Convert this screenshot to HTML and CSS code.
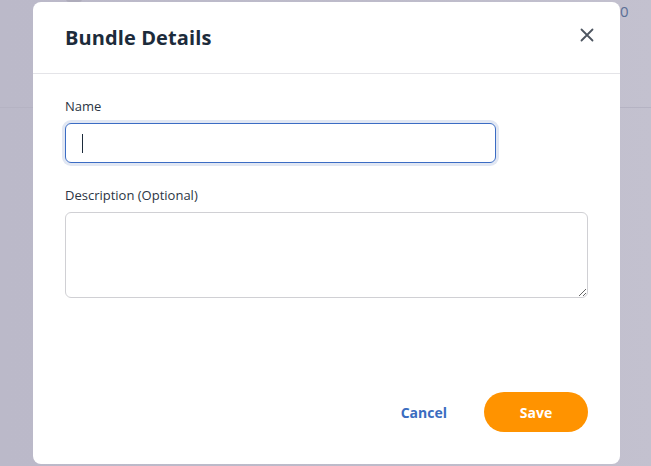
FILE: index.html
```html
<!DOCTYPE html>
<html>
<head>
<meta charset="utf-8">
<link rel="stylesheet" href="styles.css">
</head>
<body>
<div class="backdrop">
  <span class="bg-num">0</span>
  <span class="bg-chip"></span>
</div>
<div class="modal">
  <div class="modal-header">
    <h2 class="modal-title">Bundle Details</h2>
    <button class="close-btn" aria-label="Close">
      <svg width="14" height="14" viewBox="0 0 14 14"><path d="M1.5 1.5L12.5 12.5M12.5 1.5L1.5 12.5" stroke="#4d5560" stroke-width="1.8" fill="none" stroke-linecap="round"/></svg>
    </button>
  </div>
  <div class="modal-body">
    <label class="field-label">Name</label>
    <div class="text-input"><span class="caret"></span></div>
    <label class="field-label desc-label">Description (Optional)</label>
    <textarea class="text-area"></textarea>
  </div>
  <div class="modal-footer">
    <button class="btn-cancel">Cancel</button>
    <button class="btn-save">Save</button>
  </div>
</div>
</body>
</html>
```
FILE: styles.css
```css
html, body {
  margin: 0;
  padding: 0;
}
body {
  width: 651px;
  height: 466px;
  overflow: hidden;
  background: linear-gradient(to right, #bbb9c9 0%, #bdbbca 60%, #c3c1cf 100%);
  font-family: "Open Sans", "Noto Sans", sans-serif;
  padding-top: 2px;
  box-sizing: border-box;
  position: relative;
}
.backdrop {
  position: absolute;
  left: 0;
  top: 0;
  width: 651px;
  height: 466px;
  background: linear-gradient(to bottom, transparent 107px, #b5b3c3 107px, #b5b3c3 108px, transparent 108px);
}
.bg-num {
  position: absolute;
  left: 620px;
  top: 0;
  font-size: 15px;
  line-height: 22px;
  color: #5a6f96;
}
.bg-chip {
  position: absolute;
  left: 66px;
  top: -6px;
  width: 16px;
  height: 8px;
  border-radius: 3px;
  background: #aeacbb;
}
.modal {
  position: relative;
  margin-left: 33px;
  width: 587px;
  height: 462px;
  background: #ffffff;
  border-radius: 8px;
  display: flex;
  flex-direction: column;
}
.modal-header {
  height: 71px;
  border-bottom: 1px solid #e4e4e8;
  display: flex;
  align-items: center;
  justify-content: space-between;
  padding: 0 26px 0 32px;
}
.modal-title {
  margin: 0;
  font-size: 20px;
  font-weight: 700;
  color: #1c2b3b;
  letter-spacing: 0.1px;
}
.close-btn {
  border: 0;
  background: none;
  padding: 0;
  width: 14px;
  height: 14px;
  margin-top: -6px;
  display: flex;
}
.modal-body {
  padding: 23px 32px 0 32px;
  display: flex;
  flex-direction: column;
  align-items: flex-start;
}
.field-label {
  font-size: 13px;
  line-height: 18px;
  color: #2b3544;
  margin-bottom: 8px;
}
.name-label {
  color: #1c2b3b;
}
.desc-label {
  margin-top: 23px;
}
.text-input {
  width: 431px;
  height: 40px;
  box-sizing: border-box;
  border: 1px solid #3b6cc4;
  border-radius: 6px;
  box-shadow: 0 0 0 3px #e1e7f3;
  padding-left: 16px;
  display: flex;
  align-items: center;
}
.caret {
  width: 1px;
  height: 19px;
  background: #1c2b3b;
}
.text-area {
  width: 523px;
  height: 86px;
  box-sizing: border-box;
  border: 1px solid #d0d0d4;
  border-radius: 6px;
  margin: 0;
  padding: 8px 12px;
  font-family: inherit;
  resize: vertical;
  outline: none;
}
.modal-footer {
  margin-top: auto;
  padding: 0 32px 32px 0;
  display: flex;
  justify-content: flex-end;
  align-items: center;
  gap: 37px;
}
.btn-cancel {
  border: 0;
  background: none;
  padding: 0;
  font-family: inherit;
  font-size: 14px;
  font-weight: 700;
  color: #3a6cc0;
}
.btn-save {
  border: 0;
  width: 104px;
  height: 40px;
  border-radius: 20px;
  background: #ff9300;
  color: #ffffff;
  font-family: inherit;
  font-size: 14px;
  font-weight: 700;
}
```
